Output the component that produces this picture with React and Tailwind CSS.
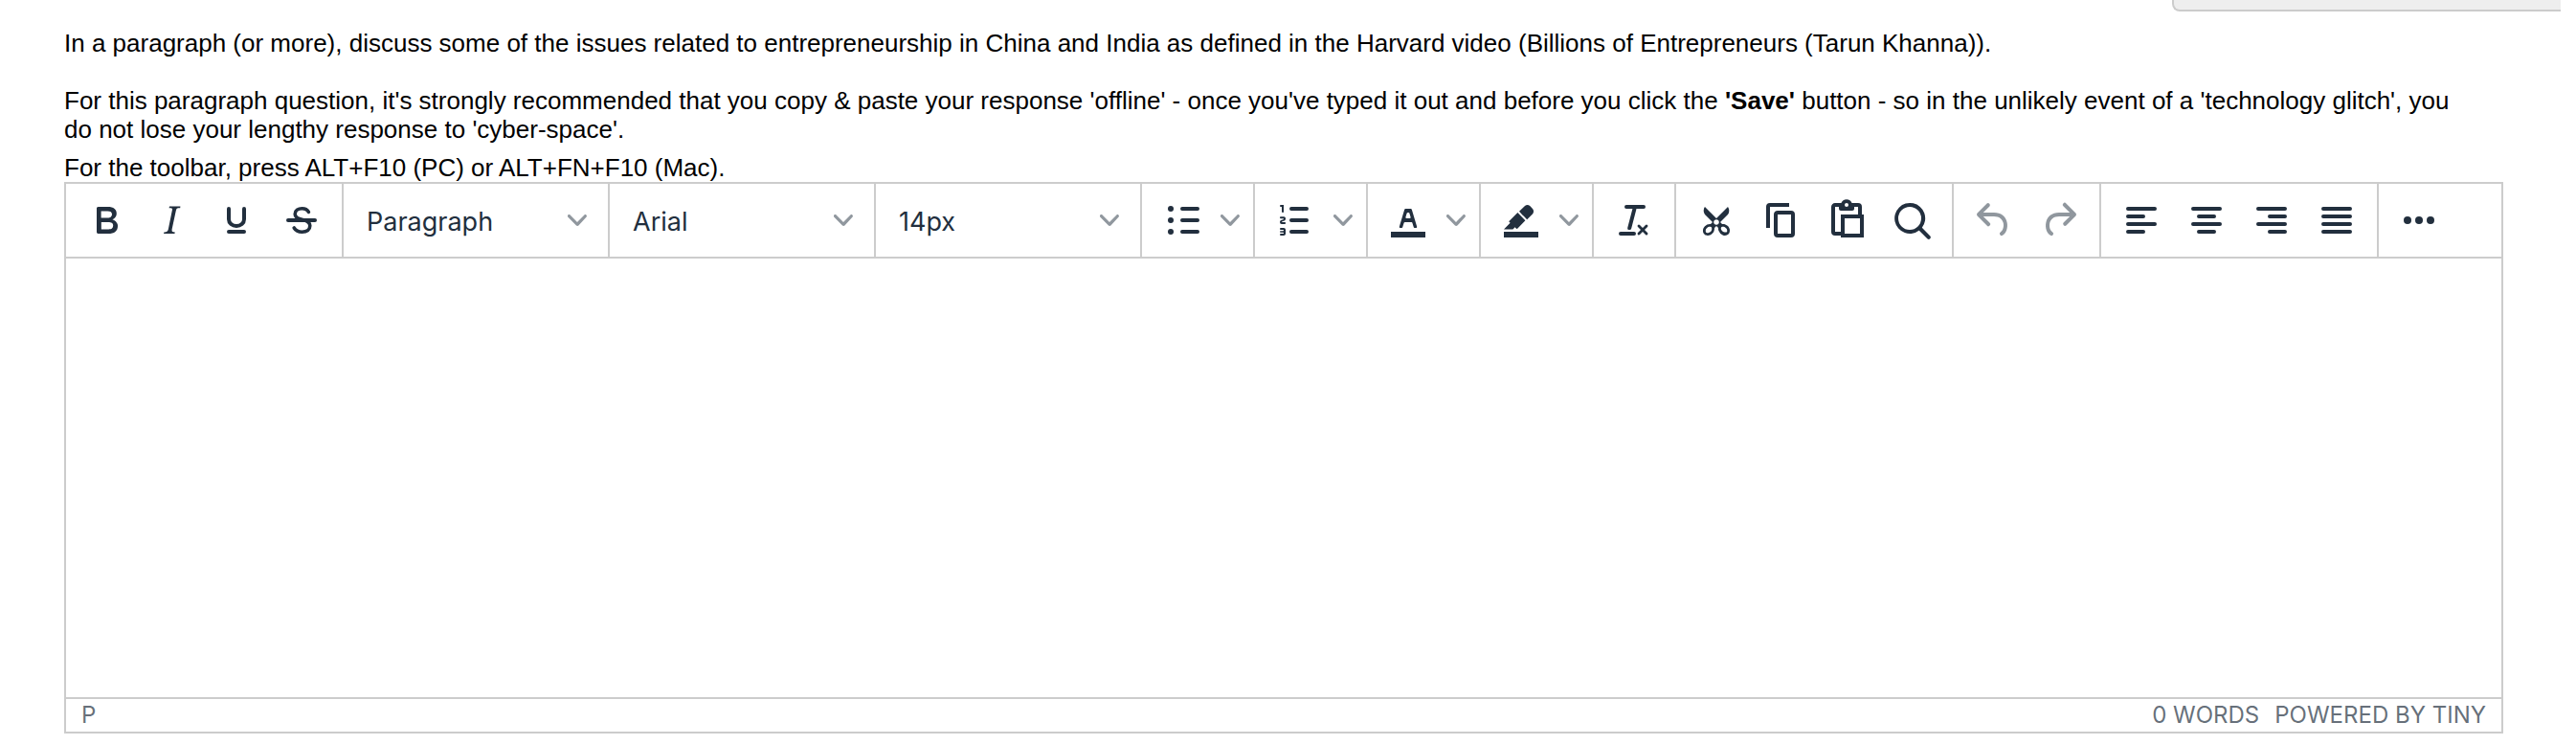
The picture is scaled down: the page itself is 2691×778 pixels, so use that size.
const icons = {
  bold: (
    <path
      fillRule="evenodd"
      d="M7.8 19c-.3 0-.5 0-.6-.2l-.2-.5V5.7c0-.2 0-.4.2-.5l.6-.2h5c1.5 0 2.7.3 3.5 1 .7.6 1.1 1.4 1.1 2.5a3 3 0 01-.6 1.9c-.4.6-1 1-1.6 1.2.4.1.9.3 1.3.6s.8.7 1 1.2c.4.4.5 1 .5 1.6 0 1.3-.4 2.3-1.3 3-.8.7-2.1 1-3.8 1H7.8zm5-8.3c.6 0 1.2-.1 1.6-.5.4-.3.6-.7.6-1.3 0-1.1-.8-1.7-2.3-1.7H9.3v3.5h3.4zm.5 6c.7 0 1.3-.1 1.7-.4.4-.4.6-.9.6-1.5s-.2-1-.7-1.4c-.4-.3-1-.4-2-.4H9.4v3.8h4z"
    />
  ),
  italic: (
    <path d="M16.7 4.7l-.1.9h-.3c-.6 0-1 0-1.4.3-.3.3-.4.6-.5 1.1l-2.1 9.8v.6c0 .5.4.8 1.4.8h.2l-.2.8H8l.2-.8h.2c1.1 0 1.8-.5 2-1.5l2-9.8.1-.5c0-.6-.4-.8-1.4-.8h-.3l.2-.9h5.8z" />
  ),
  underline: (
    <g fill="none" stroke="currentColor" strokeWidth="2" strokeLinecap="round">
      <path d="M8 6v5.500c0 2 1.800 3.500 4 3.500s4-1.500 4-3.500V6M8 18h8" />
    </g>
  ),
  strike: (
    <g fill="none" stroke="currentColor" strokeLinecap="round">
      <path strokeWidth="2" d="M5 12h14" />
      <path
        strokeWidth="1.8"
        d="M15.700 7.700C15 6.500 13.800 5.900 12.300 5.900c-2.100 0-3.700 1-3.700 2.800 0 1.600 1.200 2.400 3.600 2.900 2.900.6 4.200 1.500 4.200 3.300 0 2-1.600 3.200-4.100 3.200-1.900 0-3.400-.8-4.200-2.100"
      />
    </g>
  ),
  bullist: (
    <>
      <path fill="none" stroke="currentColor" strokeWidth="2" strokeLinecap="round" d="M12 6h8M12 12h8M12 18h8" />
      <circle cx="6" cy="6" r="1.5" />
      <circle cx="6" cy="12" r="1.5" />
      <circle cx="6" cy="18" r="1.5" />
    </>
  ),
  numlist: (
    <>
      <path fill="none" stroke="currentColor" strokeWidth="2" strokeLinecap="round" d="M10 6h8M10 12h8M10 18h8" />
      <path d="M6 4v3.500c0 .3-.2.500-.5.500a.5.5 0 01-.5-.5V5h-.5a.5.5 0 010-1H6zm-1 8.800l.2.2h1.300c.3 0 .5.2.5.5s-.2.5-.5.5H4.900a1 1 0 01-.9-1V13c0-.4.3-.8.6-1l1.200-.4.2-.3a.2.2 0 00-.2-.2H4.500a.5.5 0 01-.5-.5c0-.3.2-.5.5-.5h1.600c.5 0 .9.4.9 1v.1c0 .4-.3.8-.6 1l-1.200.4-.2.3zM7 17v2c0 .6-.4 1-1 1H4.500a.5.5 0 010-1h1.200c.2 0 .3-.1.3-.3 0-.2-.1-.3-.3-.3H4.400a.4.4 0 110-.8h1.300c.2 0 .3-.1.3-.3 0-.2-.1-.3-.3-.3H4.500a.5.5 0 110-1H6c.6 0 1 .4 1 1z" />
    </>
  ),
  forecolor: (
    <>
      <path d="M3 18h18v3H3z" />
      <path
        fillRule="evenodd"
        d="M8.700 16h-.8a.5.5 0 01-.5-.6l2.700-9c.1-.3.3-.4.5-.4h2.800c.2 0 .4.1.5.4l2.700 9a.5.5 0 01-.5.6h-.8a.5.5 0 01-.4-.4l-.7-2.200c0-.3-.3-.4-.5-.4h-3.400c-.2 0-.4.1-.5.4l-.7 2.200c0 .3-.2.4-.4.4zm2.600-7.600l-.6 2a.5.5 0 00.5.6h1.600a.5.5 0 00.5-.6l-.6-2c0-.3-.3-.4-.5-.4h-.4c-.2 0-.4.1-.5.4z"
      />
    </>
  ),
  backcolor: (
    <>
      <path d="M3 18h18v3H3z" />
      <path d="M7.700 16.700H3l3.300-3.300-.7-.8L10.200 8l4 4.100-4 4.200c-.2.2-.6.2-.8 0l-.6-.7-1.100 1.100zm5-7.500L11 7.400l3-2.900a2 2 0 012.600 0L18 6c.7.700.7 2 0 2.700l-2.900 2.900-1.800-1.800-.6-.6" />
    </>
  ),
  removeformat: (
    <path d="M13.200 6a1 1 0 010 .2l-2.600 10a1 1 0 01-1 .8h-.2a.8.8 0 01-.8-1l2.600-10H8a1 1 0 110-2h9a1 1 0 010 2h-3.800zM5 18h7a1 1 0 010 2H5a1 1 0 010-2zm13 1.500L16.500 18 15 19.500a.7.7 0 01-1-1l1.500-1.500-1.500-1.500a.7.7 0 011-1l1.500 1.500 1.500-1.500a.7.7 0 011 1L17.500 17l1.500 1.500a.7.7 0 01-1 1z" />
  ),
  cut: (
    <path
      fillRule="evenodd"
      d="M18 15c.6.700 1 1.400 1 2.300 0 .8-.2 1.500-.7 2l-.8.5-1 .2c-.4 0-.8 0-1.200-.3a3.900 3.900 0 01-2.100-2.200c-.2-.5-.3-1-.2-1.500l-1-1-1 1c0 .5 0 1-.2 1.500-.1.5-.4 1-.9 1.400-.3.4-.7.6-1.200.8l-1.200.3c-.4 0-.7 0-1-.2-.3 0-.6-.3-.8-.5-.5-.5-.8-1.200-.7-2 0-.9.4-1.600 1-2.200A3.700 3.700 0 018.600 14H9l1-1-4-4-.5-1a3.300 3.300 0 010-2c0-.4.3-.7.5-1l6 6 6-6 .5 1a3.300 3.300 0 010 2c0 .4-.3.7-.5 1l-4 4 1 1h.5c.4 0 .8 0 1.200.3.5.2.9.4 1.300.7zm-8.500 2.200l.1-.4v-.7a1 1 0 00-.2-.5 1 1 0 00-.4-.2 1.600 1.600 0 00-.8 0 2.600 2.600 0 00-.8.3 2.500 2.500 0 00-.9 1.100l-.1.4v.7l.2.5.5.2h.7a2.500 2.500 0 00.8-.3 2.800 2.800 0 00.9-1.100zm2.500-2.800c.4 0 .7-.1 1-.4.3-.3.4-.6.4-1s-.1-.7-.4-1c-.3-.3-.6-.4-1-.4s-.7.1-1 .4c-.3.3-.4.6-.4 1s.1.7.4 1c.3.3.6.4 1 .4zm5.400 4l.2-.5v-.7a2.600 2.600 0 00-.3-.8 2.400 2.400 0 00-.7-.7 2.500 2.500 0 00-.8-.3 1.500 1.500 0 00-.8 0 1 1 0 00-.4.2 1 1 0 00-.2.5v.4l.1.4a2.800 2.800 0 001 1.100 2.500 2.500 0 00.8.3h.7l.4-.2z"
    />
  ),
  copy: (
    <path
      fillRule="evenodd"
      d="M16 3H6a2 2 0 00-2 2v11h2V5h10V3zm1 4a2 2 0 012 2v10a2 2 0 01-2 2h-7a2 2 0 01-2-2V9c0-1.200.9-2 2-2h7zm0 12V9h-7v10h7z"
    />
  ),
  paste: (
    <path
      fillRule="evenodd"
      d="M18 9V5h-2v1c0 .6-.4 1-1 1H9a1 1 0 01-1-1V5H6v13h3v2H6a2 2 0 01-2-2V5c0-1.100.9-2 2-2h3.200a3 3 0 015.600 0H18a2 2 0 012 2v4h1v12H9V9h9zm1 2h-8v8h8v-8zM12 3a1 1 0 100 2 1 1 0 000-2z"
    />
  ),
  search: (
    <path
      fillRule="evenodd"
      d="M16 17.300a8 8 0 111.400-1.400l4.300 4.400a1 1 0 01-1.400 1.400l-4.400-4.300zm-5-.3a6 6 0 100-12 6 6 0 000 12z"
    />
  ),
  undo: (
    <path d="M6.400 8H12c3.700 0 6.200 2 6.800 5.100.6 2.700-.4 5.600-2.300 6.800a1 1 0 01-1-1.800c1.100-.6 1.800-2.700 1.400-4.600-.5-2.100-2.100-3.500-4.900-3.500H6.400l3.300 3.300a1 1 0 11-1.400 1.400l-5-5a1 1 0 010-1.400l5-5a1 1 0 011.400 1.400L6.400 8z" />
  ),
  redo: (
    <path d="M17.600 10H12c-2.800 0-4.400 1.400-4.900 3.500-.4 2 .3 4 1.400 4.600a1 1 0 11-1 1.800c-2-1.200-2.900-4.100-2.300-6.800.6-3 3-5.100 6.800-5.100h5.600l-3.300-3.300a1 1 0 111.400-1.400l5 5a1 1 0 010 1.400l-5 5a1 1 0 01-1.400-1.400l3.300-3.300z" />
  ),
  alignleft: (
    <path fill="none" stroke="currentColor" strokeWidth="2" strokeLinecap="round" d="M5 6h14M5 10h8M5 14h14M5 18h8" />
  ),
  aligncenter: (
    <path fill="none" stroke="currentColor" strokeWidth="2" strokeLinecap="round" d="M5 6h14M8 10h8M5 14h14M8 18h8" />
  ),
  alignright: (
    <path fill="none" stroke="currentColor" strokeWidth="2" strokeLinecap="round" d="M5 6h14M11 10h8M5 14h14M11 18h8" />
  ),
  alignjustify: (
    <path fill="none" stroke="currentColor" strokeWidth="2" strokeLinecap="round" d="M5 6h14M5 10h14M5 14h14M5 18h14" />
  ),
  more: (
    <>
      <circle cx="6" cy="12" r="2" />
      <circle cx="12" cy="12" r="2" />
      <circle cx="18" cy="12" r="2" />
    </>
  ),
};

function Chevron({ className = "" }) {
  return (
    <svg
      viewBox="0 0 10 10"
      fill="currentColor"
      aria-hidden="true"
      className={`size-5 shrink-0 text-[#222f3e]/50 ${className}`}
    >
      <path d="M8.700 2.200c.3-.3.8-.3 1 0 .4.4.4.9 0 1.200L5.700 7.800c-.3.3-.9.3-1.200 0L.2 3.400a.8.8 0 010-1.200c.3-.3.8-.3 1.100 0L5 6l3.700-3.800z" />
    </svg>
  );
}

function ToolButton({ icon, label, disabled = false }) {
  return (
    <button
      type="button"
      aria-label={label}
      disabled={disabled}
      className="flex size-17 items-center justify-center text-[#222f3e] disabled:text-[#222f3e]/50"
    >
      <svg viewBox="0 0 24 24" fill="currentColor" aria-hidden="true" className="size-12">
        {icons[icon]}
      </svg>
    </button>
  );
}

function SplitButton({ icon, label }) {
  return (
    <div className="flex">
      <ToolButton icon={icon} label={label} />
      <button
        type="button"
        aria-label={`${label} menu`}
        className="flex h-17 w-8 items-center justify-center"
      >
        <Chevron />
      </button>
    </div>
  );
}

function ToolSelect({ label, options }) {
  return (
    <div className="relative">
      <select
        aria-label={label}
        className="block h-17 w-[260px] appearance-none bg-transparent pt-1 pr-12 pl-4 text-[27px] leading-9 text-[#222f3e]"
      >
        {options.map((option) => (
          <option key={option}>{option}</option>
        ))}
      </select>
      <Chevron className="pointer-events-none absolute top-6 right-3.5" />
    </div>
  );
}

function Group({ children }) {
  return (
    <div className="flex border-r-2 border-[#ccc] px-2 py-1 last:border-r-0">
      {children}
    </div>
  );
}

function Toolbar() {
  return (
    <div role="toolbar" className="flex border-b-2 border-[#ccc]">
      <Group>
        <ToolButton icon="bold" label="Bold" />
        <ToolButton icon="italic" label="Italic" />
        <ToolButton icon="underline" label="Underline" />
        <ToolButton icon="strike" label="Strikethrough" />
      </Group>
      <Group>
        <ToolSelect label="Blocks" options={["Paragraph", "Heading 1", "Heading 2"]} />
      </Group>
      <Group>
        <ToolSelect label="Fonts" options={["Arial", "Georgia", "Verdana"]} />
      </Group>
      <Group>
        <ToolSelect label="Font sizes" options={["14px", "18px", "24px"]} />
      </Group>
      <Group>
        <SplitButton icon="bullist" label="Bullet list" />
      </Group>
      <Group>
        <SplitButton icon="numlist" label="Numbered list" />
      </Group>
      <Group>
        <SplitButton icon="forecolor" label="Text color" />
      </Group>
      <Group>
        <SplitButton icon="backcolor" label="Background color" />
      </Group>
      <Group>
        <ToolButton icon="removeformat" label="Clear formatting" />
      </Group>
      <Group>
        <ToolButton icon="cut" label="Cut" />
        <ToolButton icon="copy" label="Copy" />
        <ToolButton icon="paste" label="Paste" />
        <ToolButton icon="search" label="Find and replace" />
      </Group>
      <Group>
        <ToolButton icon="undo" label="Undo" disabled />
        <ToolButton icon="redo" label="Redo" disabled />
      </Group>
      <Group>
        <ToolButton icon="alignleft" label="Align left" />
        <ToolButton icon="aligncenter" label="Align center" />
        <ToolButton icon="alignright" label="Align right" />
        <ToolButton icon="alignjustify" label="Justify" />
      </Group>
      <Group>
        <ToolButton icon="more" label="More" />
      </Group>
    </div>
  );
}

function Editor() {
  return (
    <div className="border-2 border-[#ccc] bg-white font-['Inter',sans-serif]">
      <Toolbar />
      <textarea
        aria-label="Your response"
        className="block h-[458px] w-full resize-none p-4 text-[27px] outline-none"
      />
      <div className="flex justify-between border-t-2 border-[#ccc] px-4 text-[24px] leading-[34px] text-[#222f3e]/70">
        <span>P</span>
        <div className="flex gap-4">
          <button type="button">0 WORDS</button>
          <a href="#tiny">POWERED BY TINY</a>
        </div>
      </div>
    </div>
  );
}

function App() {
  return (
    <div className="bg-white font-['Liberation_Sans',Arial,sans-serif]">
      <div className="mr-4 ml-auto h-3 w-[406px] rounded-bl-lg border-b-2 border-l-2 border-[#ccc] bg-[#eee]" />
      <main className="mr-[76px] ml-[67px] pt-[18px] pb-3 text-[26px] leading-[30px] text-black">
        <p>
          In a paragraph (or more), discuss some of the issues related to
          entrepreneurship in China and India as defined in the Harvard video
          (Billions of Entrepreneurs (Tarun Khanna)).
        </p>
        <p className="mt-[30px] pr-8">
          For this paragraph question, it's strongly recommended that you copy
          &amp; paste your response 'offline' - once you've typed it out and
          before you click the <b>'Save'</b> button - so in the unlikely event
          of a 'technology glitch', you do not lose your lengthy response to
          'cyber-space'.
        </p>
        <p className="mt-[10px]">
          For the toolbar, press ALT+F10 (PC) or ALT+FN+F10 (Mac).
        </p>
        <Editor />
      </main>
    </div>
  );
}

export default App;
